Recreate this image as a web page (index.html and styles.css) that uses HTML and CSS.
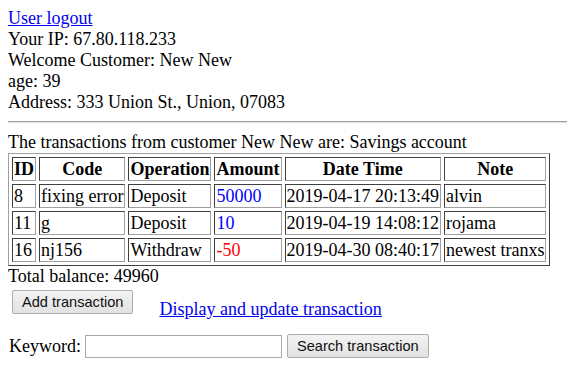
FILE: index.html
```html
<!DOCTYPE html>
<html lang="en">
<head>
    <meta charset="UTF-8">
    <title>Customer transactions</title>
    <link rel="stylesheet" href="styles.css">
</head>
<body>

    <div class="info">
        <a href="#">User logout</a><br>
        Your IP: 67.80.118.233<br>
        Welcome Customer: New New<br>
        age: 39<br>
        Address: 333 Union St., Union, 07083
    </div>

    <hr>

    <div>The transactions from customer New New are: Savings account</div>

    <table class="trans">
        <tr>
            <th>ID</th>
            <th>Code</th>
            <th>Operation</th>
            <th>Amount</th>
            <th>Date Time</th>
            <th>Note</th>
        </tr>
        <tr>
            <td>8</td>
            <td>fixing error</td>
            <td>Deposit</td>
            <td class="pos">50000</td>
            <td>2019-04-17 20:13:49</td>
            <td>alvin</td>
        </tr>
        <tr>
            <td>11</td>
            <td>g</td>
            <td>Deposit</td>
            <td class="pos">10</td>
            <td>2019-04-19 14:08:12</td>
            <td>rojama</td>
        </tr>
        <tr>
            <td>16</td>
            <td>nj156</td>
            <td>Withdraw</td>
            <td class="neg">-50</td>
            <td>2019-04-30 08:40:17</td>
            <td>newest tranxs</td>
        </tr>
    </table>

    <div>Total balance: 49960</div>

    <div class="actions">
        <button class="btn">Add transaction</button>
        <a href="#" class="update-link">Display and update transaction</a>
    </div>

    <div class="search">
        <label for="keyword">Keyword:</label>
        <input type="text" id="keyword" class="keyword">
        <button class="btn">Search transaction</button>
    </div>

</body>
</html>
```

FILE: styles.css
```css
body {
    margin: 8px;
    font-family: "Liberation Serif", "Times New Roman", serif;
    font-size: 18px;
    line-height: 21px;
    color: #000;
    background: #fff;
}

a {
    color: #0000ee;
}

hr {
    margin: 8px 0 9px;
    border: none;
    border-top: 1px solid #a0a0a0;
    border-bottom: 1px solid #e0e0e0;
}

.trans {
    border-collapse: separate;
    border-spacing: 3px;
    border: 1px solid;
    border-color: #a0a0a0 #404040 #404040 #a0a0a0;
}

.trans th,
.trans td {
    padding: 1px;
    line-height: 20px;
    border: 1px solid;
    border-color: #404040 #a0a0a0 #a0a0a0 #404040;
    text-align: left;
    white-space: nowrap;
}

.trans th {
    text-align: center;
}

.pos {
    color: #0000ff;
}

.neg {
    color: #ff0000;
}

.btn {
    height: 24px;
    font-family: "Liberation Sans", Arial, sans-serif;
    font-size: 14.6px;
    line-height: 17px;
    padding: 2px 9px;
    color: #111;
    background: linear-gradient(#f3f3f3, #e2e2e2);
    border: 1px solid #adadad;
    border-radius: 2px;
}

.actions {
    display: flex;
    align-items: flex-start;
    margin-top: 3px;
    padding-left: 4px;
}

.update-link {
    margin-left: 26px;
    margin-top: 9px;
}

.search {
    display: flex;
    align-items: center;
    margin-top: 14px;
    padding-left: 1px;
}

.keyword {
    width: 191px;
    height: 19px;
    margin: 0 5px 0 4px;
    padding: 1px 2px;
    border: 1px solid #a9a9a9;
}
```
